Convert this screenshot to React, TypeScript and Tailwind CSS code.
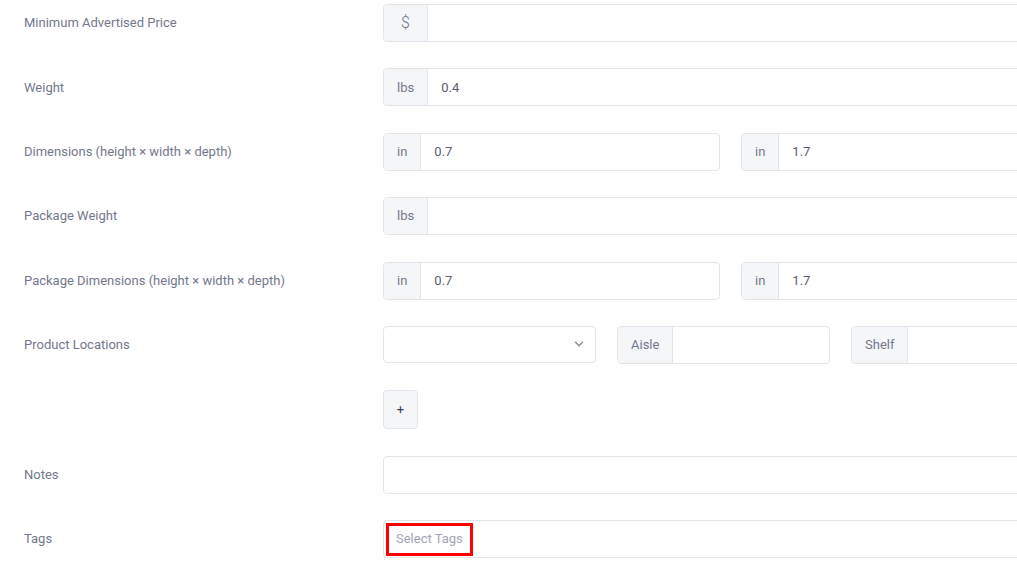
import { ChevronDown } from "lucide-react";

const addon =
  "flex items-center justify-center px-[13px] bg-[#f5f6f8] border-r border-[#e2e5ec] text-[13px] text-[#74788d]";

function Group({ label, value, className }: { label: string; value?: string; className?: string }) {
  return (
    <div className={`flex h-[38px] rounded-[4px] border border-[#e2e5ec] bg-white overflow-hidden ${className ?? ""}`}>
      <span className={addon}>{label}</span>
      <div className="flex flex-1 items-center px-[13px] text-[13px] text-[#595d6e]">{value}</div>
    </div>
  );
}

function Row({ label, children }: { label: string; children: React.ReactNode }) {
  return (
    <div className="flex items-center">
      <div className="w-[383px] shrink-0 pl-[24px] text-[13px] text-[#74788d]">{label}</div>
      <div className="flex gap-[21px]">{children}</div>
    </div>
  );
}

export default function App() {
  return (
    <div className="h-[587px] w-[1017px] overflow-hidden bg-white pt-[4px] font-['Roboto',sans-serif]">
      <div className="flex flex-col gap-[26.4px]">
        <Row label="Minimum Advertised Price">
          <Group label="$" className="w-[1053px] [&>span]:text-[16px] [&>span]:px-[17px] [&>span]:font-light" />
        </Row>
        <Row label="Weight">
          <Group label="lbs" value="0.4" className="w-[1053px]" />
        </Row>
        <Row label="Dimensions (height × width × depth)">
          <Group label="in" value="0.7" className="w-[337px]" />
          <Group label="in" value="1.7" className="w-[337px]" />
        </Row>
        <Row label="Package Weight">
          <Group label="lbs" className="w-[1053px]" />
        </Row>
        <Row label="Package Dimensions (height × width × depth)">
          <Group label="in" value="0.7" className="w-[337px]" />
          <Group label="in" value="1.7" className="w-[337px]" />
        </Row>
        <Row label="Product Locations">
          <div className="flex h-[37px] w-[213px] items-center justify-end rounded-[4px] border border-[#e2e5ec] bg-white pr-[9px]">
            <ChevronDown size={14} strokeWidth={2.5} className="text-[#8a8d98]" />
          </div>
          <Group label="Aisle" className="w-[213px]" />
          <Group label="Shelf" className="w-[213px]" />
        </Row>
        <Row label="">
          <button className="flex h-[39px] w-[35px] items-center justify-center rounded-[4px] border border-[#e2e5ec] bg-[#f5f6f8] text-[13px] text-[#3f4254]">
            +
          </button>
        </Row>
        <Row label="Notes">
          <div className="h-[38px] w-[1053px] rounded-[4px] border border-[#e2e5ec] bg-white" />
        </Row>
        <Row label="Tags">
          <div className="flex h-[38px] w-[1053px] items-center rounded-[4px] border border-[#e2e5ec] bg-white pl-[2px]">
            <span className="flex h-[33px] items-center border-[3px] border-[#ff0000] px-[7px] text-[13px] text-[#a2a5b9]">
              Select Tags
            </span>
          </div>
        </Row>
      </div>
    </div>
  );
}
